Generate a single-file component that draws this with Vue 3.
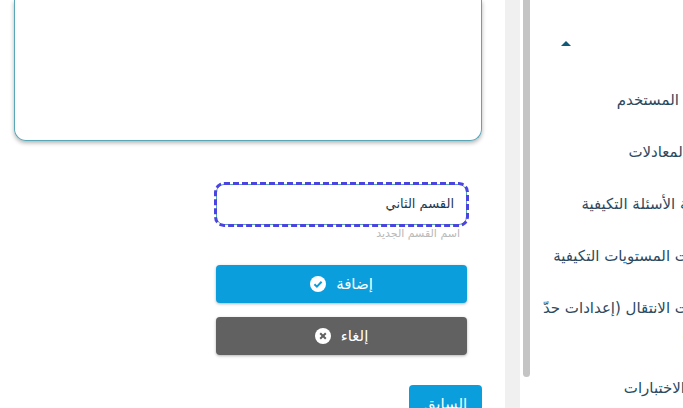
<script setup>
import { ref } from 'vue';

const sectionName = ref('القسم الثاني');

const menuItems = [
  'حساب المستخدم',
  'محرر المعادلات',
  'مراجعة الأسئلة التكيفية',
  'إعدادات المستويات التكيفية',
  'إعدادات الانتقال (إعدادات حدّ النجاح)',
  'جدول الاختبارات'
];
</script>

<template>
  <div class="page">
    <main class="content" dir="rtl">
      <div class="editor"></div>

      <div class="form">
        <input v-model="sectionName" class="name-input" type="text" />
        <p class="hint">اسم القسم الجديد</p>

        <button class="btn btn-add" type="button">
          <span>إضافة</span>
          <svg class="btn-icon" viewBox="0 0 16 16">
            <circle cx="8" cy="8" r="8" fill="#fff" />
            <path d="M4.4 8.3l2.5 2.4 4.7-5" fill="none" stroke="#0a9fdc" stroke-width="2" />
          </svg>
        </button>
        <button class="btn btn-cancel" type="button">
          <span>إلغاء</span>
          <svg class="btn-icon" viewBox="0 0 16 16">
            <circle cx="8" cy="8" r="8" fill="#fff" />
            <path d="M5.2 5.2l5.6 5.6M10.8 5.2l-5.6 5.6" fill="none" stroke="#616161" stroke-width="2" />
          </svg>
        </button>
      </div>

      <button class="btn-prev" type="button">السابق</button>
    </main>

    <div class="track"></div>

    <div class="thumb-rail">
      <div class="thumb"></div>
    </div>

    <nav class="sidebar" dir="rtl">
      <div class="caret-row">
        <span class="caret"></span>
      </div>
      <a v-for="item in menuItems" :key="item" class="menu-item">{{ item }}</a>
    </nav>
  </div>
</template>

<style scoped>
.page {
  display: flex;
  width: 683px;
  height: 408px;
  overflow: hidden;
  background: #fff;
  font-family: "DejaVu Sans", "Noto Sans", sans-serif;
}

.content {
  flex: none;
  display: flex;
  flex-direction: column;
  align-items: flex-start;
  width: 468px;
  padding: 0 23px 0 14px;
}

.editor {
  flex: none;
  width: 468px;
  height: 141px;
  box-sizing: border-box;
  border: 1px solid #58a6b6;
  border-top: none;
  border-radius: 0 0 12px 12px;
  box-shadow: 0 2px 4px rgba(0, 0, 0, 0.3);
}

.form {
  display: flex;
  flex-direction: column;
  width: 251px;
  margin: 43px 15px 0 0;
}

.name-input {
  width: 251px;
  height: 41px;
  box-sizing: border-box;
  padding: 0 12px 2px;
  border: 1px solid #58a6b6;
  border-radius: 8px;
  outline: 3px dashed #4a45e0;
  outline-offset: -1px;
  color: #1d3a52;
  font-family: inherit;
  font-size: 13px;
  text-align: right;
}

.hint {
  margin: 2px 7px 0 0;
  color: #b9b9b9;
  font-size: 11px;
  line-height: 14px;
}

.btn {
  display: flex;
  align-items: center;
  justify-content: center;
  gap: 10px;
  width: 251px;
  height: 38px;
  padding: 0;
  border: none;
  border-radius: 4px;
  box-shadow: 0 1px 3px rgba(0, 0, 0, 0.3);
  color: #fff;
  font-family: inherit;
  font-size: 15px;
}

.btn-add {
  margin-top: 24px;
  background: #0a9fdc;
}

.btn-cancel {
  margin-top: 14px;
  background: #616161;
}

.btn-icon {
  flex: none;
  width: 16px;
  height: 16px;
}

.btn-prev {
  flex: none;
  width: 73px;
  height: 38px;
  margin-top: 30px;
  padding: 0;
  border: none;
  border-radius: 4px;
  background: #0a9fdc;
  color: #fff;
  font-family: inherit;
  font-size: 15px;
}

.track {
  flex: none;
  width: 15px;
  height: 408px;
  background: #f0f0f0;
}

.thumb-rail {
  flex: none;
  width: 10px;
  padding-left: 3px;
  box-sizing: border-box;
}

.thumb {
  width: 7px;
  height: 377px;
  border-radius: 0 0 4px 4px;
  background: #c4c4c4;
}

.sidebar {
  flex: none;
  display: flex;
  flex-direction: column;
  width: 185px;
  margin-left: 10px;
  box-sizing: border-box;
  color: #2c4a60;
  font-size: 15px;
}

.caret-row {
  flex: none;
  height: 86px;
  display: flex;
  align-items: flex-start;
  justify-content: flex-end;
  padding: 41px 0 0 21px;
  box-sizing: border-box;
}

.caret {
  width: 0;
  height: 0;
  border-left: 5px solid transparent;
  border-right: 5px solid transparent;
  border-bottom: 5px solid #0e5a78;
}

.menu-item {
  flex: none;
  display: block;
  padding: 0 0 24px;
  line-height: 28px;
}
</style>

<style>
html,
body {
  margin: 0;
  overflow: hidden;
}
</style>
